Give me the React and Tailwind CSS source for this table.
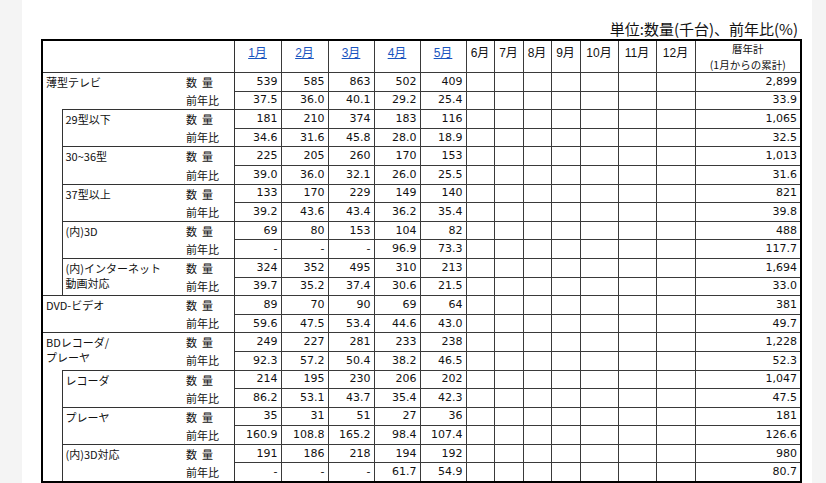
import React from "react";

const months = ["1月", "2月", "3月", "4月", "5月", "6月", "7月", "8月", "9月", "10月", "11月", "12月"];
const widths = ["w-[47px]", "w-[47px]", "w-[46px]", "w-[46px]", "w-[46px]", "w-[28px]", "w-[29px]", "w-[28px]", "w-[29px]", "w-[38px]", "w-[38px]", "w-[39px]"];

// level 0 = top category, level 1 = indented sub item; sub = table rows spanned by the indent column
const groups = [
  { name: "薄型テレビ", level: 0, q: ["539", "585", "863", "502", "409"], r: ["37.5", "36.0", "40.1", "29.2", "25.4"], tq: "2,899", tr: "33.9" },
  { name: "29型以下", level: 1, sub: 10, q: ["181", "210", "374", "183", "116"], r: ["34.6", "31.6", "45.8", "28.0", "18.9"], tq: "1,065", tr: "32.5" },
  { name: "30~36型", level: 1, q: ["225", "205", "260", "170", "153"], r: ["39.0", "36.0", "32.1", "26.0", "25.5"], tq: "1,013", tr: "31.6" },
  { name: "37型以上", level: 1, q: ["133", "170", "229", "149", "140"], r: ["39.2", "43.6", "43.4", "36.2", "35.4"], tq: "821", tr: "39.8" },
  { name: "(内)3D", level: 1, q: ["69", "80", "153", "104", "82"], r: ["-", "-", "-", "96.9", "73.3"], tq: "488", tr: "117.7" },
  { name: ["(内)インターネット", "動画対応"], level: 1, q: ["324", "352", "495", "310", "213"], r: ["39.7", "35.2", "37.4", "30.6", "21.5"], tq: "1,694", tr: "33.0" },
  { name: "DVD-ビデオ", level: 0, q: ["89", "70", "90", "69", "64"], r: ["59.6", "47.5", "53.4", "44.6", "43.0"], tq: "381", tr: "49.7" },
  { name: ["BDレコーダ/", "プレーヤ"], level: 0, q: ["249", "227", "281", "233", "238"], r: ["92.3", "57.2", "50.4", "38.2", "46.5"], tq: "1,228", tr: "52.3" },
  { name: "レコーダ", level: 1, sub: 6, q: ["214", "195", "230", "206", "202"], r: ["86.2", "53.1", "43.7", "35.4", "42.3"], tq: "1,047", tr: "47.5" },
  { name: "プレーヤ", level: 1, q: ["35", "31", "51", "27", "36"], r: ["160.9", "108.8", "165.2", "98.4", "107.4"], tq: "181", tr: "126.6" },
  { name: "(内)3D対応", level: 1, q: ["191", "186", "218", "194", "192"], r: ["-", "-", "-", "61.7", "54.9"], tq: "980", tr: "80.7" },
];

const jp = { fontFamily: '"Noto Sans CJK JP", sans-serif' };
const digits = { fontFamily: '"DejaVu Sans", Verdana, sans-serif' };
const num = "border border-[#3a3a3a] text-right pr-[3px] h-[18.6px] p-0 align-middle text-[11px]";

function Name({ name }) {
  return Array.isArray(name) ? (
    <>
      {name[0]}
      <br />
      {name[1]}
    </>
  ) : (
    name
  );
}

function DataRow({ vals, total }) {
  return (
    <>
      {months.map((m, i) => (
        <td key={m} className={num} style={digits}>
          {vals[i] || ""}
        </td>
      ))}
      <td className={num} style={digits}>{total}</td>
    </>
  );
}

export default function App() {
  return (
    <div className="flex min-h-screen bg-white text-[#111]" style={{ fontFamily: '"Liberation Sans", "Noto Sans CJK JP", sans-serif' }}>
      <div className="w-[22px] shrink-0 bg-[#f4f4f4]" />
      <div className="w-[790px] shrink-0 pl-[19px] pt-[19px]">
        <div className="w-[757px] text-right text-[15px] leading-[20px]" style={jp}>
          単位:数量(千台)、前年比(%)
        </div>
        <table className="w-[759px] table-fixed border-collapse border-2 border-black text-[12px] leading-[14px]">
          <tbody>
            <tr>
              <td className="w-[20px] h-[32px] p-0 border-b border-[#333]" />
              <td className="w-[117px] p-0 border-b border-[#333]" />
              <td className="w-[55px] p-0 border-r border-b border-[#333]" />
              {months.map((m, i) => (
                <td key={m} className={`${widths[i]} border border-[#3a3a3a] p-0 pt-[5px] align-top text-center`}>
                  {i < 5 ? <a href="#" className="text-[#1a55c0] underline">{m}</a> : m}
                </td>
              ))}
              <td className="w-[106px] border border-[#3a3a3a] p-0 text-center align-middle text-[10.5px] leading-[15.5px]" style={jp}>
                <div>暦年計</div>
                <div>(1月からの累計)</div>
              </td>
            </tr>
            {groups.map((g, gi) => (
              <React.Fragment key={gi}>
                <tr>
                  {g.sub && <td rowSpan={g.sub} className="p-0" />}
                  <td
                    rowSpan={2}
                    colSpan={g.level === 0 ? 2 : 1}
                    className={`p-0 align-top border-t border-[#333] pl-[3px] pt-[2px] text-[11px] leading-[15px] ${g.level === 1 ? "border-l" : ""}`}
                    style={jp}
                  >
                    <Name name={g.name} />
                  </td>
                  <td className="p-0 pl-[7px] border-t border-r border-[#333] text-[11px] whitespace-pre" style={jp}>
                    {"数  量"}
                  </td>
                  <DataRow vals={g.q} total={g.tq} />
                </tr>
                <tr>
                  <td className="p-0 pl-[7px] border-r border-[#333] text-[11px]" style={jp}>
                    前年比
                  </td>
                  <DataRow vals={g.r} total={g.tr} />
                </tr>
              </React.Fragment>
            ))}
          </tbody>
        </table>
      </div>
      <div className="flex-1 bg-[#f4f4f4]" />
    </div>
  );
}
